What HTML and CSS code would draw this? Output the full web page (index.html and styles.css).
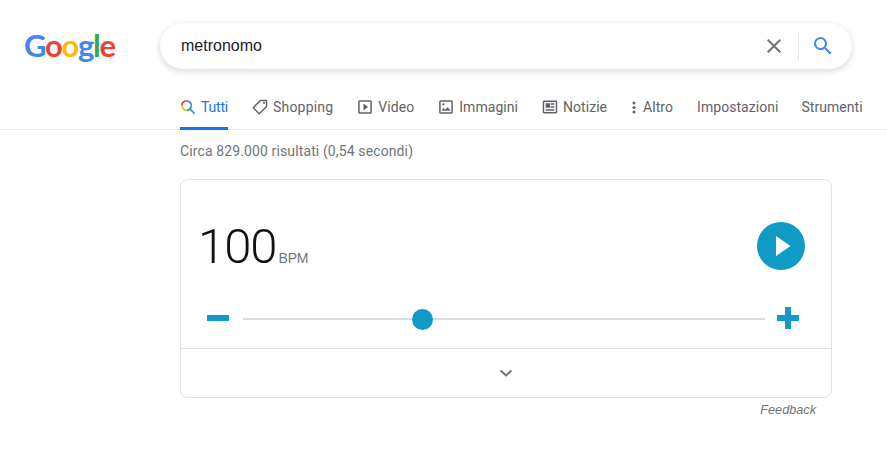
FILE: index.html
```html
<!DOCTYPE html>
<html lang="it">
<head>
<meta charset="utf-8">
<title>metronomo - Cerca con Google</title>
<link rel="stylesheet" href="styles.css">
</head>
<body>
<header class="top">
  <div class="logo"><span class="b">G</span><span class="r">o</span><span class="y">o</span><span class="b">g</span><span class="g">l</span><span class="r">e</span></div>
  <div class="search">
    <span class="query">metronomo</span>
    <svg class="clear" width="24" height="24" viewBox="0 0 24 24"><path d="M19 6.410 17.590 5 12 10.590 6.410 5 5 6.410 10.590 12 5 17.590 6.410 19 12 13.410 17.590 19 19 17.590 13.410 12z" fill="#70757a"/></svg>
    <span class="sep"></span>
    <svg class="go" width="24" height="24" viewBox="0 0 24 24"><path d="M15.500 14h-.79l-.28-.27A6.470 6.470 0 0 0 16 9.500 6.500 6.500 0 1 0 9.500 16c1.610 0 3.090-.59 4.230-1.570l.27.28v.79l5 4.990L20.490 19l-4.990-5zm-6 0C7.010 14 5 11.990 5 9.500S7.010 5 9.500 5 14 7.010 14 9.500 11.990 14 9.500 14z" fill="#4285f4"/></svg>
  </div>
</header>
<nav class="tabs">
  <a class="tab active">
    <svg width="16" height="16" viewBox="1 1 22 22" fill="none" stroke-width="2.4"><path d="M10 3.500A6.500 6.500 0 0 0 3.500 10" stroke="#ea4335"/><path d="M3.500 10A6.500 6.500 0 0 0 10 16.500" stroke="#fbbc05"/><path d="M10 16.500A6.500 6.500 0 0 0 16.500 10" stroke="#34a853"/><path d="M16.500 10A6.500 6.500 0 0 0 10 3.500" stroke="#4285f4"/><path d="m15 15 6 6" stroke="#4285f4" stroke-width="2.600"/></svg>
    <span>Tutti</span>
  </a>
  <a class="tab shopping">
    <svg width="16" height="16" viewBox="1 1 22 22"><path d="M21.410 11.580l-9-9A2 2 0 0 0 11 2H4a2 2 0 0 0-2 2v7c0 .55.22 1.050.59 1.420l9 9a2 2 0 0 0 2.820 0l7-7a2 2 0 0 0 0-2.840zM13 20l-9-9V4h7l9 9-7 7z" fill="#5f6368" transform="matrix(-1 0 0 1 24 0)"/><circle cx="17.500" cy="6.500" r="1.500" fill="#5f6368"/></svg>
    <span>Shopping</span>
  </a>
  <a class="tab">
    <svg width="16" height="16" viewBox="1.500 1.500 21 21"><path d="M10 16.500l6-4.500-6-4.500zM19 3H5a2 2 0 0 0-2 2v14a2 2 0 0 0 2 2h14a2 2 0 0 0 2-2V5a2 2 0 0 0-2-2zm0 16H5V5h14z" fill="#5f6368"/></svg>
    <span>Video</span>
  </a>
  <a class="tab images">
    <svg width="16" height="16" viewBox="1.500 1.500 21 21"><path d="M19 5v14H5V5h14m0-2H5a2 2 0 0 0-2 2v14a2 2 0 0 0 2 2h14a2 2 0 0 0 2-2V5a2 2 0 0 0-2-2zm-4.860 8.860-3 3.870L9 13.140 6 17h12l-3.860-5.140z" fill="#5f6368"/><circle cx="8.500" cy="8.500" r="1.500" fill="#5f6368"/></svg>
    <span>Immagini</span>
  </a>
  <a class="tab">
    <svg width="16" height="16" viewBox="1 1 22 22"><path d="M20 3H4a2 2 0 0 0-2 2v14a2 2 0 0 0 2 2h16a2 2 0 0 0 2-2V5a2 2 0 0 0-2-2zm0 16H4V5h16zM6 7h6v6H6zm7 0h5v2h-5zm0 4h5v2h-5zM6 15h12v2H6z" fill="#5f6368"/></svg>
    <span>Notizie</span>
  </a>
  <a class="tab more">
    <svg width="4" height="16" viewBox="0 0 4 16"><circle cx="2" cy="4" r="1.500" fill="#5f6368"/><circle cx="2" cy="8.500" r="1.500" fill="#5f6368"/><circle cx="2" cy="13" r="1.500" fill="#5f6368"/></svg>
    <span>Altro</span>
  </a>
  <a class="tab">Impostazioni</a>
  <a class="tab last">Strumenti</a>
</nav>
<main class="results">
  <p class="stats">Circa 829.000 risultati (0,54 secondi)</p>
  <section class="card">
    <div class="upper">
      <div class="tempo-row">
        <div class="tempo"><span class="num">100</span><span class="unit">BPM</span></div>
        <button class="play" aria-label="Play"><svg width="20" height="22" viewBox="0 0 20 22"><path d="M3 1l14.500 10L3 21z" fill="#fff"/></svg></button>
      </div>
      <div class="slider-row">
        <svg class="step" width="22" height="22" viewBox="0 0 22 22"><rect x="0" y="8" width="22" height="6" fill="#0f9bc6"/></svg>
        <div class="track"><span class="thumb"></span></div>
        <svg class="step" width="22" height="22" viewBox="0 0 22 22"><path d="M8 0h6v8h8v6h-8v8H8v-8H0V8h8z" fill="#0f9bc6"/></svg>
      </div>
    </div>
    <div class="expand">
      <svg width="14" height="9" viewBox="0 0 14 9"><path d="M1.500 1.500 7 6.500l5.500-5" fill="none" stroke="#70757a" stroke-width="2"/></svg>
    </div>
  </section>
  <div class="feedback">Feedback</div>
</main>
</body>
</html>
```
FILE: styles.css
```css
* { box-sizing: border-box; }
html, body { margin: 0; padding: 0; background: #fff; }
body { font-family: Roboto, "Liberation Sans", sans-serif; overflow: hidden; height: 457px; }

.top { display: flex; align-items: center; padding-top: 23px; height: 69px; }
.logo { width: 160px; padding: 0 0 2px 24px; font-family: Lato, sans-serif; font-size: 31px; line-height: 46px; letter-spacing: -1.300px; font-weight: 700; }
.b { color: #4285f4; } .r { color: #ea4335; } .y { color: #fbbc05; } .g { color: #34a853; }

.search { width: 692px; height: 46px; border-radius: 23px; background: #fff; box-shadow: 0 2px 5px 1px rgba(64,60,67,.16); display: flex; align-items: center; padding: 0 17px 0 21px; }
.query { flex: 1; font-family: "Liberation Sans", sans-serif; font-size: 16px; color: #202124; }
.clear { margin-right: 12px; }
.sep { width: 1px; height: 28px; background: #dfe1e5; margin-right: 12px; }

.tabs { height: 61px; padding: 25px 0 0 180px; display: flex; gap: 24px; border-bottom: 1px solid #ebebeb; }
.tab { display: flex; align-items: flex-start; gap: 5px; height: 36px; font-size: 14px; line-height: 26px; letter-spacing: .05px; color: #5f6368; white-space: nowrap; }
.tab svg { margin-top: 5px; flex: none; }
.tab.active { color: #1a73e8; border-bottom: 3px solid #1a73e8; letter-spacing: -.2px; }
.tab.shopping { letter-spacing: .2px; }
.tab.more { gap: 7px; margin-left: 1px; }
.tab.last { margin-left: -1px; }

.results { padding-left: 180px; }
.stats { margin: 0; padding-top: 11px; height: 49px; font-size: 14px; line-height: 20px; letter-spacing: .12px; color: #70757a; }
.card { width: 652px; height: 219px; border: 1px solid #dfe1e5; border-radius: 8px; display: flex; flex-direction: column; }
.upper { flex: 1; border-bottom: 1px solid #dfe1e5; padding: 42px 26px 0 17px; }
.tempo-row { display: flex; justify-content: space-between; align-items: flex-start; height: 88px; }
.tempo { display: flex; align-items: baseline; gap: 2px; }
.num { font-size: 49px; line-height: 50px; font-weight: 300; color: #111; letter-spacing: -1px; }
.unit { font-family: "Liberation Sans", sans-serif; font-size: 14px; letter-spacing: -.2px; color: #70757a; }
.play { width: 48px; height: 48px; border: 0; border-radius: 50%; background: #0f9bc6; padding: 0; display: flex; align-items: center; justify-content: center; }
.play svg { margin-left: 3px; }

.slider-row { display: flex; align-items: center; gap: 14px; padding-left: 9px; margin-right: 6px; margin-top: -3px; }
.slider-row .step { flex: none; }
.track { flex: 1; height: 2px; margin: 2px -2px 0 0; background: #dadce0; position: relative; }
.thumb { position: absolute; left: 169px; top: -9px; width: 21px; height: 21px; border-radius: 50%; background: #0f9bc6; }

.expand { height: 48px; display: flex; align-items: center; justify-content: center; }
.feedback { width: 636px; margin-top: 5px; text-align: right; font-family: "Liberation Sans", sans-serif; font-style: italic; font-size: 12.700px; line-height: 15px; color: #70757a; }
```
